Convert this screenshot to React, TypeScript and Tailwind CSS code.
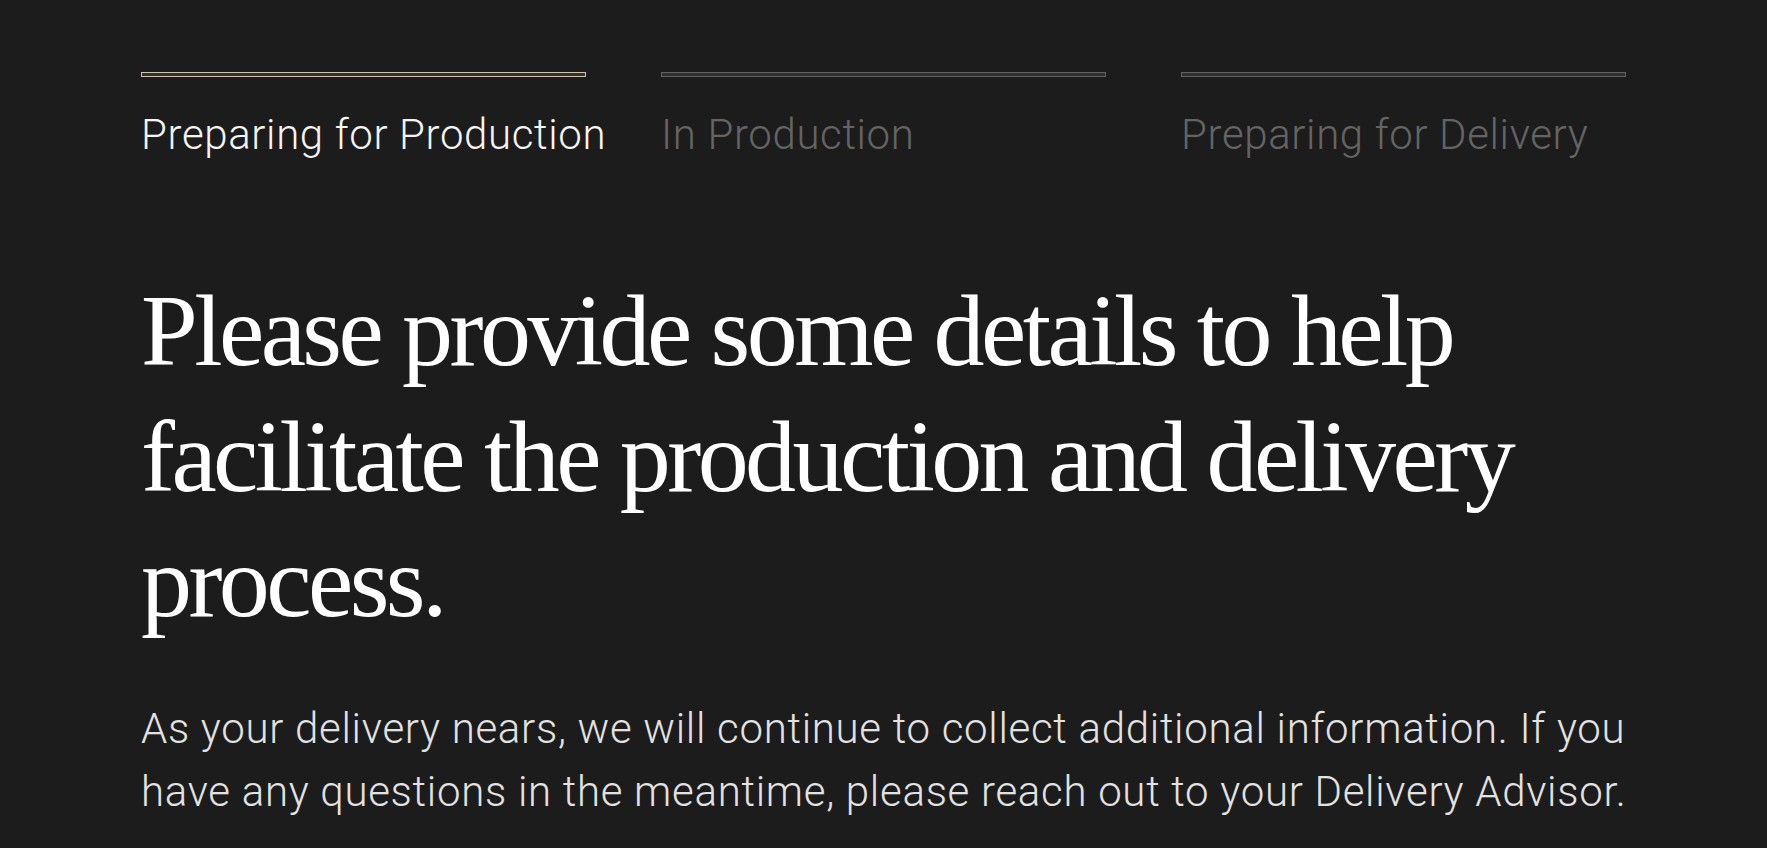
import React from "react";

const steps = [
  { label: "Preparing for Production", active: true },
  { label: "In Production", active: false },
  { label: "Preparing for Delivery", active: false },
];

export default function App() {
  return (
    <div className="min-h-[848px] w-full bg-[#1c1c1c] overflow-hidden">
      <div className="mx-auto w-[1485px] pt-[72px]">
        <div className="grid grid-cols-3 gap-x-[75px]">
          {steps.map((s) => (
            <div key={s.label} className="flex flex-col">
              <div
                className={
                  s.active
                    ? "h-[5px] border border-[#cdc3b1] bg-[#34312c]"
                    : "h-[5px] border border-[#626262] bg-[#2f2f2f]"
                }
              />
              <div
                className={
                  "mt-[37px] whitespace-nowrap text-[42px] leading-[42px] tracking-[0.63px] font-light font-['Roboto',sans-serif] " +
                  (s.active ? "text-[#f4f4f4]" : "text-[#646464]")
                }
              >
                {s.label}
              </div>
            </div>
          ))}
        </div>

        <h1 className="mt-[112px] whitespace-nowrap text-[102px] leading-[125.5px] tracking-[-0.035em] font-normal text-white font-['Liberation_Serif',serif]">
          Please provide some details to help
          <br />
          facilitate the production and delivery
          <br />
          process.
        </h1>

        <p className="mt-[52px] whitespace-nowrap text-[42px] leading-[63px] tracking-[0.7px] font-light text-[#e2e2e2] font-['Roboto',sans-serif]">
          As your delivery nears, we will continue to collect additional information. If you
          <br />
          have any questions in the meantime, please reach out to your Delivery Advisor.
        </p>
      </div>
    </div>
  );
}
